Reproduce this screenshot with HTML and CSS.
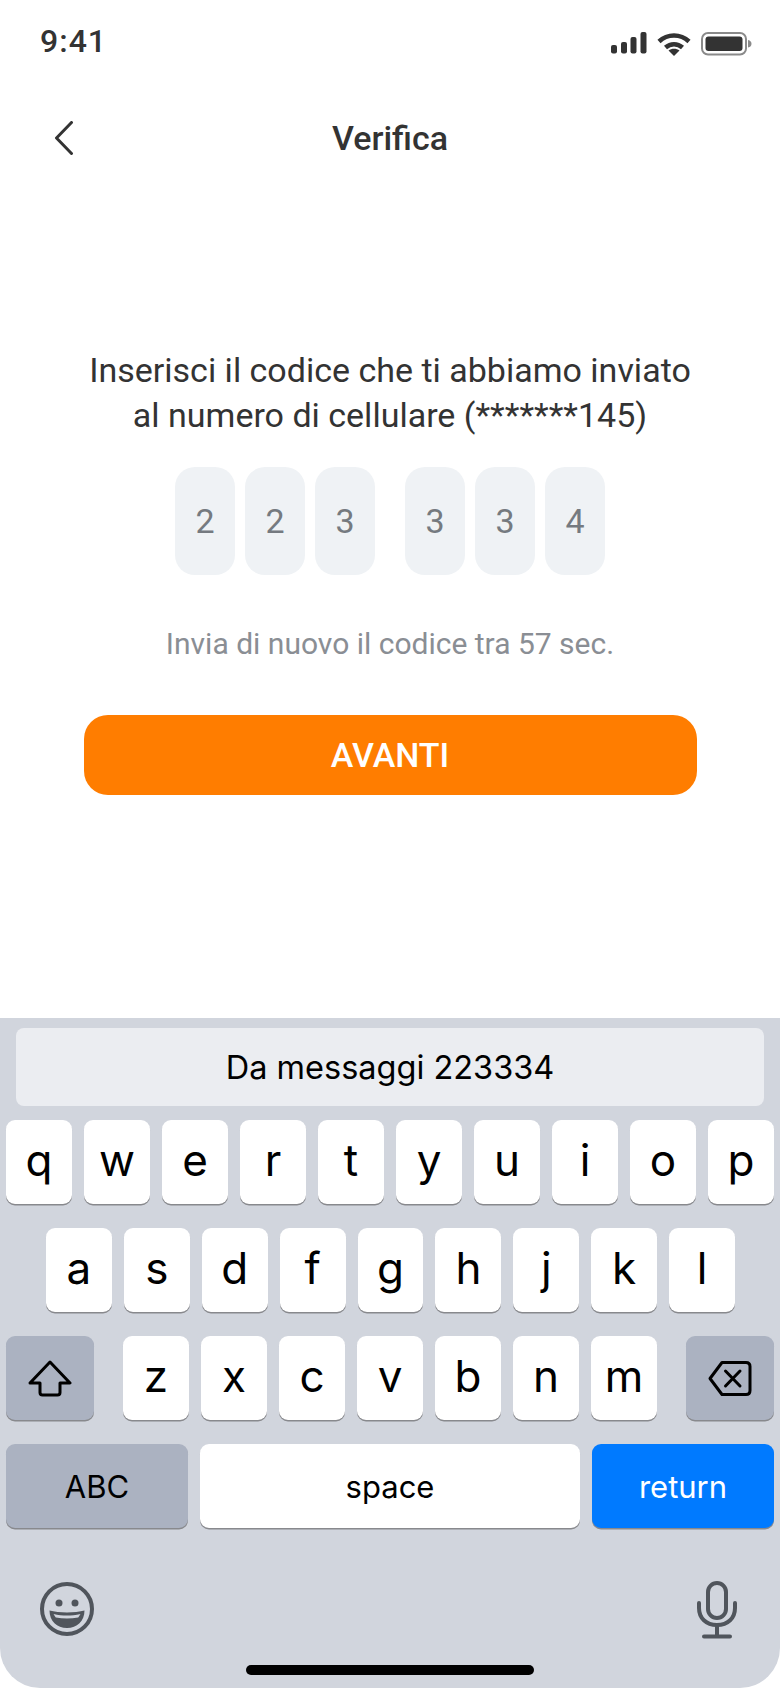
FILE: index.html
```html
<!DOCTYPE html>
<html lang="it">

<head>
    <meta charset="UTF-8">
    <meta name="viewport" content="width=device-width, initial-scale=1.0">
    <title>Verifica</title>
    <link rel="stylesheet" href="styles.css">
</head>

<body>
    <div class="status-bar">
        <span class="time">9:41</span>
        <div class="status-icons">
            <svg class="signal" width="36" height="22" viewBox="0 0 36 22">
                <rect x="0" y="13" width="6" height="8.500" rx="2" />
                <rect x="10" y="10" width="6" height="11.500" rx="2" />
                <rect x="19.500" y="5" width="6" height="16.500" rx="2" />
                <rect x="29.500" y="0" width="6" height="21.500" rx="2" />
            </svg>
            <svg class="wifi" width="34" height="24" viewBox="0 0 34 24">
                <path class="wifi-arc" d="M2 9.500C10.500 1.500 23.500 1.500 32 9.500" />
                <path class="wifi-arc" d="M8.500 15.500C13.500 11 20.500 11 25.500 15.500" />
                <path d="M11.500 18.500C14.500 16.200 19.500 16.200 22.500 18.500L17 24Z" />
            </svg>
            <svg class="battery" width="52" height="24" viewBox="0 0 52 24">
                <rect class="battery-shell" x="1" y="1" width="44" height="21.500" rx="6" />
                <rect x="4.500" y="4.500" width="37" height="14.500" rx="3" />
                <path class="battery-nub" d="M47 8C49.500 8.500 50.500 10 50.500 11.700C50.500 13.500 49.500 15 47 15.500Z" />
            </svg>
        </div>
    </div>

    <header class="nav">
        <button class="back" aria-label="Indietro">
            <svg width="20" height="34" viewBox="0 0 20 34">
                <path d="M17.500 1.500L2.500 17L17.500 32.500" />
            </svg>
        </button>
        <h1>Verifica</h1>
    </header>

    <main class="content">
        <p class="intro">Inserisci il codice che ti abbiamo inviato<br>al numero di cellulare (*******145)</p>

        <div class="code">
            <div class="code-group">
                <span class="digit">2</span>
                <span class="digit">2</span>
                <span class="digit">3</span>
            </div>
            <div class="code-group">
                <span class="digit">3</span>
                <span class="digit">3</span>
                <span class="digit">4</span>
            </div>
        </div>

        <p class="resend">Invia di nuovo il codice tra 57 sec.</p>

        <button class="next">AVANTI</button>
    </main>

    <section class="keyboard">
        <div class="suggestion">Da messaggi 223334</div>

        <div class="key-row">
            <span class="key">q</span>
            <span class="key">w</span>
            <span class="key">e</span>
            <span class="key">r</span>
            <span class="key">t</span>
            <span class="key">y</span>
            <span class="key">u</span>
            <span class="key">i</span>
            <span class="key">o</span>
            <span class="key">p</span>
        </div>

        <div class="key-row row-home">
            <span class="key">a</span>
            <span class="key">s</span>
            <span class="key">d</span>
            <span class="key">f</span>
            <span class="key">g</span>
            <span class="key">h</span>
            <span class="key">j</span>
            <span class="key">k</span>
            <span class="key">l</span>
        </div>

        <div class="key-row row-shift">
            <span class="key key-dark key-wide">
                <svg width="44" height="37" viewBox="0 0 44 37">
                    <path d="M22 2L42 23H32V32.500Q32 35 29.500 35H14.500Q12 35 12 32.500V23H2Z" />
                </svg>
            </span>
            <div class="letters">
                <span class="key">z</span>
                <span class="key">x</span>
                <span class="key">c</span>
                <span class="key">v</span>
                <span class="key">b</span>
                <span class="key">n</span>
                <span class="key">m</span>
            </div>
            <span class="key key-dark key-wide">
                <svg width="44" height="37" viewBox="0 0 44 37">
                    <path d="M2 18.500L14 2.500H38Q42 2.500 42 6.500V30.500Q42 34.500 38 34.500H14Z" />
                    <path d="M17.500 11L32 26M32 11L17.500 26" />
                </svg>
            </span>
        </div>

        <div class="key-row row-bottom">
            <span class="key key-dark key-label">ABC</span>
            <span class="key key-label">space</span>
            <span class="key key-blue key-label">return</span>
        </div>

        <div class="keyboard-tools">
            <svg class="tool" width="56" height="56" viewBox="0 0 56 56">
                <circle class="tool-line" cx="28" cy="28" r="25" />
                <circle cx="20" cy="22" r="3.500" />
                <circle cx="36" cy="22" r="3.500" />
                <path d="M10.500 29.500C20 32 36 32 45.500 29.500C45.500 40 38 47 28 47C18 47 10.500 40 10.500 29.500ZM14.500 33C15.500 34.500 16 35.500 16.800 36.500C24 37.700 32 37.700 39.200 36.500C40 35.500 40.500 34.500 41.500 33C32 35 24 35 14.500 33Z" fill-rule="evenodd" />
            </svg>
            <svg class="tool" width="42" height="58" viewBox="0 0 42 58">
                <rect class="tool-line" x="12" y="2" width="18" height="35" rx="9" />
                <path class="tool-line" d="M3 22V27C3 37 10 44 21 44C32 44 39 37 39 27V22" />
                <path class="tool-line" d="M21 44V55M8 55.500H34" />
            </svg>
        </div>

        <div class="home-indicator"></div>
    </section>
</body>

</html>
```

FILE: styles.css
```css
* {
    box-sizing: border-box;
}

body {
    font-family: 'Roboto', sans-serif;
    background-color: white;
    color: #333;
    margin: 0;
    width: 780px;
    height: 1688px;
    display: flex;
    flex-direction: column;
    overflow: hidden;
}

/* status bar */
.status-bar {
    height: 87px;
    padding: 23px 27px 0 40px;
    display: flex;
    justify-content: space-between;
    align-items: flex-start;
}

.time {
    font-size: 32px;
    font-weight: 500;
    line-height: 36px;
    letter-spacing: 1px;
}

.status-icons {
    display: flex;
    align-items: flex-start;
    gap: 10px;
    padding-top: 9px;
}

.status-icons svg {
    fill: #333;
}

.wifi-arc {
    fill: none;
    stroke: #333;
    stroke-width: 4.500;
}

.battery-shell {
    fill: none;
    stroke: #8a8a8a;
    stroke-width: 2;
}

.battery-nub {
    fill: #8a8a8a;
}

/* header */
.nav {
    height: 56px;
    margin-top: 23px;
    position: relative;
    display: flex;
    justify-content: center;
    align-items: center;
}

.nav h1 {
    margin: 0;
    font-size: 34px;
    font-weight: 500;
    line-height: 56px;
}

.back {
    position: absolute;
    left: 54px;
    top: 11px;
    padding: 0;
    border: none;
    background: none;
    line-height: 0;
}

.back path {
    fill: none;
    stroke: #333;
    stroke-width: 3;
    stroke-linecap: round;
    stroke-linejoin: round;
}

/* code form */
.content {
    padding-top: 182px;
    display: flex;
    flex-direction: column;
    align-items: center;
}

.intro {
    margin: 0;
    font-size: 34px;
    line-height: 45px;
    text-align: center;
}

.code {
    margin-top: 29px;
    display: flex;
    gap: 30px;
}

.code-group {
    display: flex;
    gap: 10px;
}

.digit {
    width: 60px;
    height: 108px;
    border-radius: 20px;
    background-color: #eff2f5;
    color: #757a80;
    font-size: 34px;
    display: flex;
    justify-content: center;
    align-items: center;
}

.resend {
    margin: 49px 0 0;
    font-size: 30px;
    line-height: 40px;
    color: #8a8e94;
}

.next {
    margin-top: 51px;
    width: 613px;
    height: 80px;
    border: none;
    border-radius: 24px;
    background-color: #ff7d00;
    color: white;
    font-family: 'Roboto', sans-serif;
    font-size: 34px;
    font-weight: 500;
}

/* keyboard */
.keyboard {
    margin-top: auto;
    height: 670px;
    padding: 10px 6px 0;
    background-color: #d1d5dd;
    border-radius: 0 0 40px 40px;
    font-family: 'Inter', sans-serif;
    color: black;
    display: flex;
    flex-direction: column;
}

.suggestion {
    height: 78px;
    margin: 0 10px 14px;
    border-radius: 8px;
    background-color: #ebedf1;
    font-size: 32.500px;
    display: flex;
    justify-content: center;
    align-items: center;
}

.key-row {
    display: flex;
    gap: 12px;
    margin-bottom: 24px;
}

.row-home {
    padding: 0 39px 0 40px;
}

.row-shift {
    justify-content: space-between;
}

.letters {
    display: flex;
    gap: 12px;
}

.key {
    width: 66px;
    height: 84px;
    border-radius: 9px;
    background-color: white;
    box-shadow: 0 1.500px 0 #88898d;
    font-size: 44px;
    padding-bottom: 4px;
    display: flex;
    justify-content: center;
    align-items: center;
}

.key-dark {
    background-color: #abb2c1;
    padding-bottom: 0;
}

.key-wide {
    width: 88px;
}

.key svg {
    fill: none;
    stroke: black;
    stroke-width: 3;
    stroke-linejoin: round;
    stroke-linecap: round;
}

.key-label {
    font-size: 31px;
    padding-bottom: 0;
}

.row-bottom .key-dark,
.row-bottom .key-blue {
    width: 182px;
}

.row-bottom .key:nth-child(2) {
    flex: 1;
}

.key-blue {
    background-color: #007aff;
    color: white;
}

.keyboard-tools {
    margin-top: 29px;
    padding: 0 36px 0 33px;
    display: flex;
    justify-content: space-between;
}

.tool {
    fill: #50555c;
}

.tool-line {
    fill: none;
    stroke: #50555c;
    stroke-width: 4;
    stroke-linecap: round;
}

.home-indicator {
    width: 288px;
    height: 10px;
    margin: 26px auto 0;
    border-radius: 5px;
    background-color: black;
}
```
